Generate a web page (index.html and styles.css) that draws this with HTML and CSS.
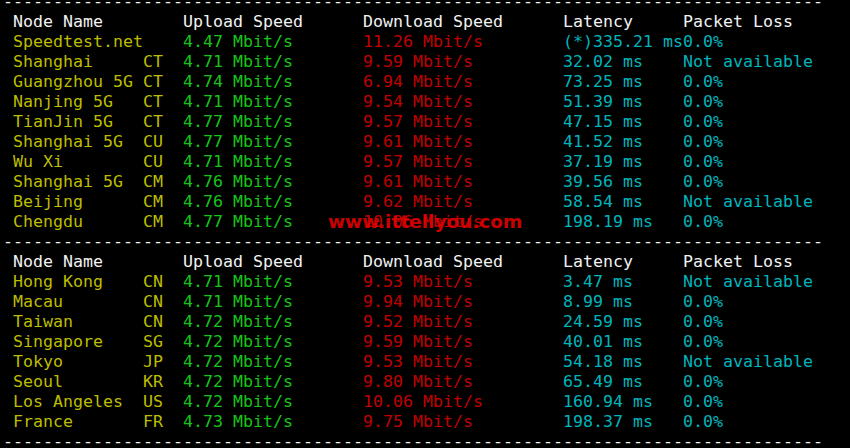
FILE: index.html
```html
<!DOCTYPE html>
<html lang="en">
<head>
  <meta charset="UTF-8">
  <title>Speed Test</title>
  <link rel="stylesheet" href="styles.css">
</head>
<body>

  <div class="term">
    <div class="sep">----------------------------------------------------------------------------------</div>

    <!-- first block -->
    <div class="row head"><span class="name"> Node Name</span><span class="up">Upload Speed</span><span class="down">Download Speed</span><span class="lat">Latency</span><span class="loss">Packet Loss</span></div>
    <div class="row"><span class="name"> Speedtest.net</span><span class="up">4.47 Mbit/s</span><span class="down">11.26 Mbit/s</span><span class="lat">(*)335.21 ms</span><span class="loss">0.0%</span></div>
    <div class="row"><span class="name"> Shanghai     CT</span><span class="up">4.71 Mbit/s</span><span class="down">9.59 Mbit/s</span><span class="lat">32.02 ms</span><span class="loss">Not available</span></div>
    <div class="row"><span class="name"> Guangzhou 5G CT</span><span class="up">4.74 Mbit/s</span><span class="down">6.94 Mbit/s</span><span class="lat">73.25 ms</span><span class="loss">0.0%</span></div>
    <div class="row"><span class="name"> Nanjing 5G   CT</span><span class="up">4.71 Mbit/s</span><span class="down">9.54 Mbit/s</span><span class="lat">51.39 ms</span><span class="loss">0.0%</span></div>
    <div class="row"><span class="name"> TianJin 5G   CT</span><span class="up">4.77 Mbit/s</span><span class="down">9.57 Mbit/s</span><span class="lat">47.15 ms</span><span class="loss">0.0%</span></div>
    <div class="row"><span class="name"> Shanghai 5G  CU</span><span class="up">4.77 Mbit/s</span><span class="down">9.61 Mbit/s</span><span class="lat">41.52 ms</span><span class="loss">0.0%</span></div>
    <div class="row"><span class="name"> Wu Xi        CU</span><span class="up">4.71 Mbit/s</span><span class="down">9.57 Mbit/s</span><span class="lat">37.19 ms</span><span class="loss">0.0%</span></div>
    <div class="row"><span class="name"> Shanghai 5G  CM</span><span class="up">4.76 Mbit/s</span><span class="down">9.61 Mbit/s</span><span class="lat">39.56 ms</span><span class="loss">0.0%</span></div>
    <div class="row"><span class="name"> Beijing      CM</span><span class="up">4.76 Mbit/s</span><span class="down">9.62 Mbit/s</span><span class="lat">58.54 ms</span><span class="loss">Not available</span></div>
    <div class="row"><span class="name"> Chengdu      CM</span><span class="up">4.77 Mbit/s</span><span class="down">10.06 Mbit/s</span><span class="lat">198.19 ms</span><span class="loss">0.0%</span></div>
    <div class="sep">----------------------------------------------------------------------------------</div>

    <!-- second block -->
    <div class="row head"><span class="name"> Node Name</span><span class="up">Upload Speed</span><span class="down">Download Speed</span><span class="lat">Latency</span><span class="loss">Packet Loss</span></div>
    <div class="row"><span class="name"> Hong Kong    CN</span><span class="up">4.71 Mbit/s</span><span class="down">9.53 Mbit/s</span><span class="lat">3.47 ms</span><span class="loss">Not available</span></div>
    <div class="row"><span class="name"> Macau        CN</span><span class="up">4.71 Mbit/s</span><span class="down">9.94 Mbit/s</span><span class="lat">8.99 ms</span><span class="loss">0.0%</span></div>
    <div class="row"><span class="name"> Taiwan       CN</span><span class="up">4.72 Mbit/s</span><span class="down">9.52 Mbit/s</span><span class="lat">24.59 ms</span><span class="loss">0.0%</span></div>
    <div class="row"><span class="name"> Singapore    SG</span><span class="up">4.72 Mbit/s</span><span class="down">9.59 Mbit/s</span><span class="lat">40.01 ms</span><span class="loss">0.0%</span></div>
    <div class="row"><span class="name"> Tokyo        JP</span><span class="up">4.72 Mbit/s</span><span class="down">9.53 Mbit/s</span><span class="lat">54.18 ms</span><span class="loss">Not available</span></div>
    <div class="row"><span class="name"> Seoul        KR</span><span class="up">4.72 Mbit/s</span><span class="down">9.80 Mbit/s</span><span class="lat">65.49 ms</span><span class="loss">0.0%</span></div>
    <div class="row"><span class="name"> Los Angeles  US</span><span class="up">4.72 Mbit/s</span><span class="down">10.06 Mbit/s</span><span class="lat">160.94 ms</span><span class="loss">0.0%</span></div>
    <div class="row"><span class="name"> France       FR</span><span class="up">4.73 Mbit/s</span><span class="down">9.75 Mbit/s</span><span class="lat">198.37 ms</span><span class="loss">0.0%</span></div>
    <div class="sep">----------------------------------------------------------------------------------</div>
  </div>

  <!-- watermark over the screenshot -->
  <div class="mark">www.ittellyou.com</div>

</body>
</html>
```

FILE: styles.css
```css
/* terminal window */
body {
  margin: 0;
  background-color: #000;
  height: 448px;
  overflow: hidden;
  position: relative;
}

.term {
  margin-top: -8px; /* scrolled, first line half cut */
  padding-left: 3px;
  font-family: "DejaVu Sans Mono", monospace;
  font-size: 16.61px;
  line-height: 20px;
}

.sep {
  color: #f0f0f0;
  white-space: pre;
}

.row {
  display: flex;
}

.row span {
  flex: none;
  white-space: pre;
}

.name { width: 18ch; color: #bdbd00; }
.up   { width: 18ch; color: #17c417; }
.down { width: 20ch; color: #c00000; }
.lat  { width: 12ch; color: #00b4bc; }
.loss { color: #00b4bc; }

.head span {
  color: #f2f2f2;
}

/* red watermark */
.mark {
  position: absolute;
  left: 328px;
  top: 213px;
  font-family: "DejaVu Sans", sans-serif;
  font-weight: bold;
  font-size: 18.5px;
  line-height: 18px;
  color: #e60000;
  opacity: 0.88;
}
```
